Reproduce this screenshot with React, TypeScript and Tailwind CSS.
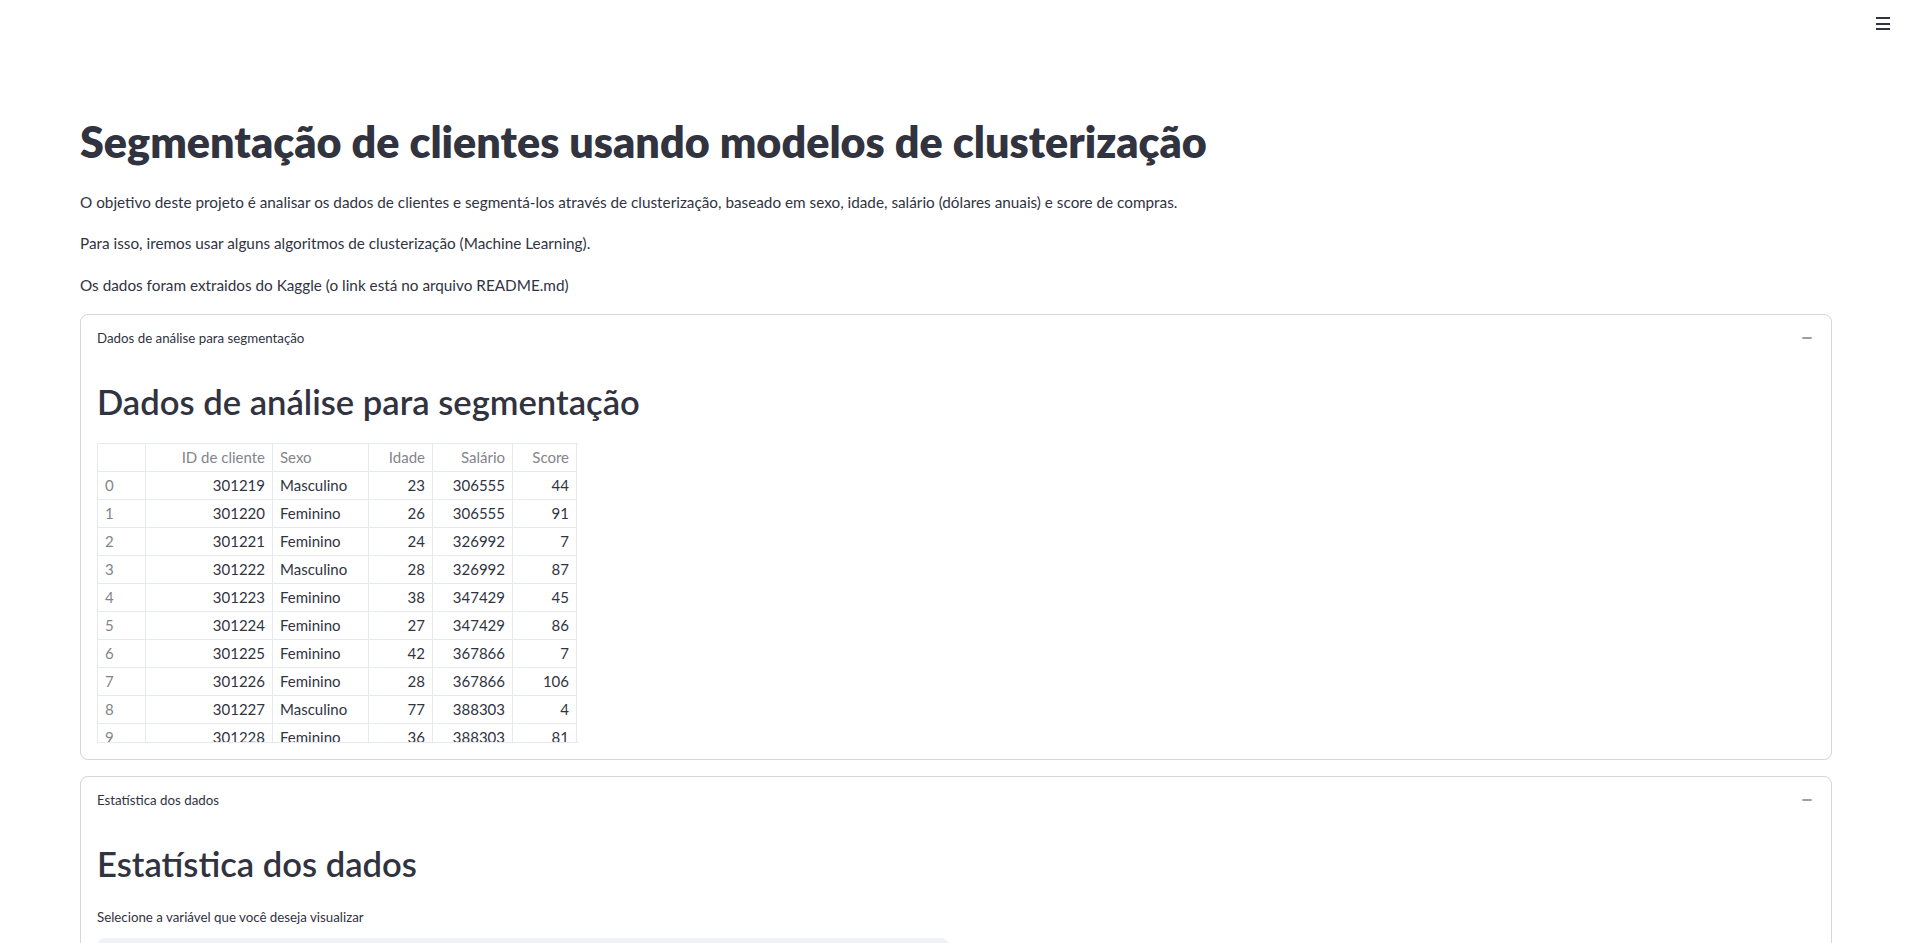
const rows = [
  ["0", "301219", "Masculino", "23", "306555", "44"],
  ["1", "301220", "Feminino", "26", "306555", "91"],
  ["2", "301221", "Feminino", "24", "326992", "7"],
  ["3", "301222", "Masculino", "28", "326992", "87"],
  ["4", "301223", "Feminino", "38", "347429", "45"],
  ["5", "301224", "Feminino", "27", "347429", "86"],
  ["6", "301225", "Feminino", "42", "367866", "7"],
  ["7", "301226", "Feminino", "28", "367866", "106"],
  ["8", "301227", "Masculino", "77", "388303", "4"],
  ["9", "301228", "Feminino", "36", "388303", "81"],
];

const headers = ["", "ID de cliente", "Sexo", "Idade", "Salário", "Score"];

const MinusIcon = () => (
  <svg width="16" height="16" viewBox="0 0 24 24" className="text-[#6b6d78]">
    <path d="M19 13H5v-2h14v2z" fill="currentColor" />
  </svg>
);

const Expander = ({ label, children }: { label: string; children: React.ReactNode }) => (
  <div className="border border-[#d6d6d9] rounded-lg">
    <div className="flex items-center justify-between px-4 pt-[13px] pb-[13px]">
      <span className="text-[13.3px] leading-5">{label}</span>
      <MinusIcon />
    </div>
    <div className="px-4 pb-4">{children}</div>
  </div>
);

const DataTable = () => (
  <div className="h-[300px] w-[481px] overflow-hidden border-l border-t border-b border-[#e6e9ef]">
    <div className="grid grid-cols-[48px_127px_96px_64px_80px_64px] text-[15px]">
      {headers.map((h, i) => (
        <div
          key={"h" + i}
          className={
            "h-[28px] px-[7px] flex items-center border-r border-b border-[#e6e9ef] text-[#83858c] " +
            (i === 2 ? "justify-start" : "justify-end")
          }
        >
          {h}
        </div>
      ))}
      {rows.map((r) =>
        r.map((c, i) => (
          <div
            key={r[0] + "-" + i}
            className={
              "h-[28px] px-[7px] flex items-center border-r border-b border-[#e6e9ef] " +
              (i === 0 ? "justify-start text-[#83858c]" : i === 2 ? "justify-start" : "justify-end")
            }
          >
            {c}
          </div>
        ))
      )}
    </div>
  </div>
);

export default function App() {
  return (
    <div className="min-h-screen bg-white text-[#31333F] font-['Lato',sans-serif]">
      <header className="h-[46px] flex items-center justify-end pr-[29px]">
        <svg width="14" height="14" viewBox="0 0 14 14">
          <rect x="0" y="1" width="14" height="2" fill="#31333F" />
          <rect x="0" y="7" width="14" height="2" fill="#31333F" />
          <rect x="0" y="12" width="14" height="2" fill="#31333F" />
        </svg>
      </header>

      <main className="pl-20 pr-[87px] pt-[70px] pb-10">
        <h1 className="text-[43.1px] font-extrabold leading-[1.2] mb-[22px]">
          Segmentação de clientes usando modelos de clusterização
        </h1>
        <p className="text-[15.3px] leading-[25.6px] mb-4">
          O objetivo deste projeto é analisar os dados de clientes e segmentá-los através de clusterização, baseado em
          sexo, idade, salário (dólares anuais) e score de compras.
        </p>
        <p className="text-[15.3px] leading-[25.6px] mb-4">
          Para isso, iremos usar alguns algoritmos de clusterização (Machine Learning).
        </p>
        <p className="text-[15.3px] leading-[25.6px] mb-4">
          Os dados foram extraidos do Kaggle (o link está no arquivo README.md)
        </p>

        <div className="flex flex-col gap-4">
          <Expander label="Dados de análise para segmentação">
            <h2 className="text-[34.6px] font-semibold leading-[1.2] pt-5 mb-5">Dados de análise para segmentação</h2>
            <DataTable />
          </Expander>

          <Expander label="Estatística dos dados">
            <h2 className="text-[34.6px] font-semibold leading-[1.2] pt-5 mb-[23px]">Estatística dos dados</h2>
            <label className="block text-[13.3px] leading-5 mb-[11px]">
              Selecione a variável que você deseja visualizar
            </label>
            <div className="w-[852px] h-[40px] rounded-lg bg-[#f0f2f6]"></div>
          </Expander>
        </div>
      </main>
    </div>
  );
}
